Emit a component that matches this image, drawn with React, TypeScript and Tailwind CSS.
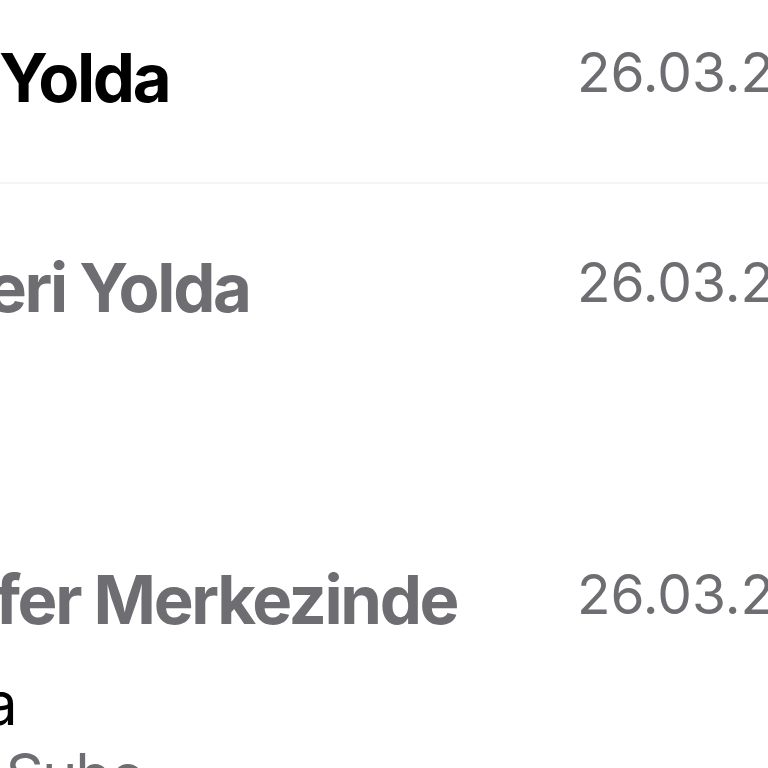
const steps = [
  {
    title: "Kargo Yolda",
    date: "26.03.2024",
    active: true,
    shift: "-ml-[199px]",
    lines: [] as string[],
    divider: true,
    pad: "pt-[44px] pb-[71px]",
  },
  {
    title: "Geri Yolda",
    date: "26.03.2024",
    active: false,
    shift: "-ml-[61px]",
    lines: [] as string[],
    divider: false,
    pad: "pt-[70px] pb-[245px]",
  },
  {
    title: "Transfer Merkezinde",
    date: "26.03.2024",
    active: false,
    shift: "-ml-[179px]",
    lines: ["Ankara", "Kızılay Şube"],
    divider: false,
    pad: "pt-0 pb-10",
  },
];

export default function App() {
  return (
    <div
      className="w-[768px] h-[768px] overflow-hidden bg-white"
      style={{ fontFamily: "Inter, 'Noto Sans', sans-serif" }}
    >
      {steps.map((s, i) => (
        <div key={i} className={s.divider ? "border-b-2 border-[#f4f4f5]" : ""}>
          <div className={`flex items-start ${s.pad}`}>
            <div className="w-[577px] shrink-0 overflow-hidden">
              <div className={`${s.shift} whitespace-nowrap`}>
                <div
                  className={`text-[67px] font-bold leading-none tracking-[-0.035em] ${
                    s.active ? "text-black" : "text-[#6d6d72]"
                  }`}
                >
                  {s.title}
                </div>
                {s.lines.length > 0 && (
                  <div className="mt-[34px]">
                    {s.lines.map((l, j) => (
                      <div
                        key={j}
                        className={`text-[60px] leading-[72px] ${
                          j === 0
                            ? "text-black tracking-[-0.01em]"
                            : "text-[#6d6d72] tracking-[-0.035em]"
                        }`}
                      >
                        {l}
                      </div>
                    ))}
                  </div>
                )}
              </div>
            </div>
            <div className="text-[55px] leading-none whitespace-nowrap text-[#6d6d72] pt-[1px]">
              {s.date}
            </div>
          </div>
        </div>
      ))}
    </div>
  );
}
